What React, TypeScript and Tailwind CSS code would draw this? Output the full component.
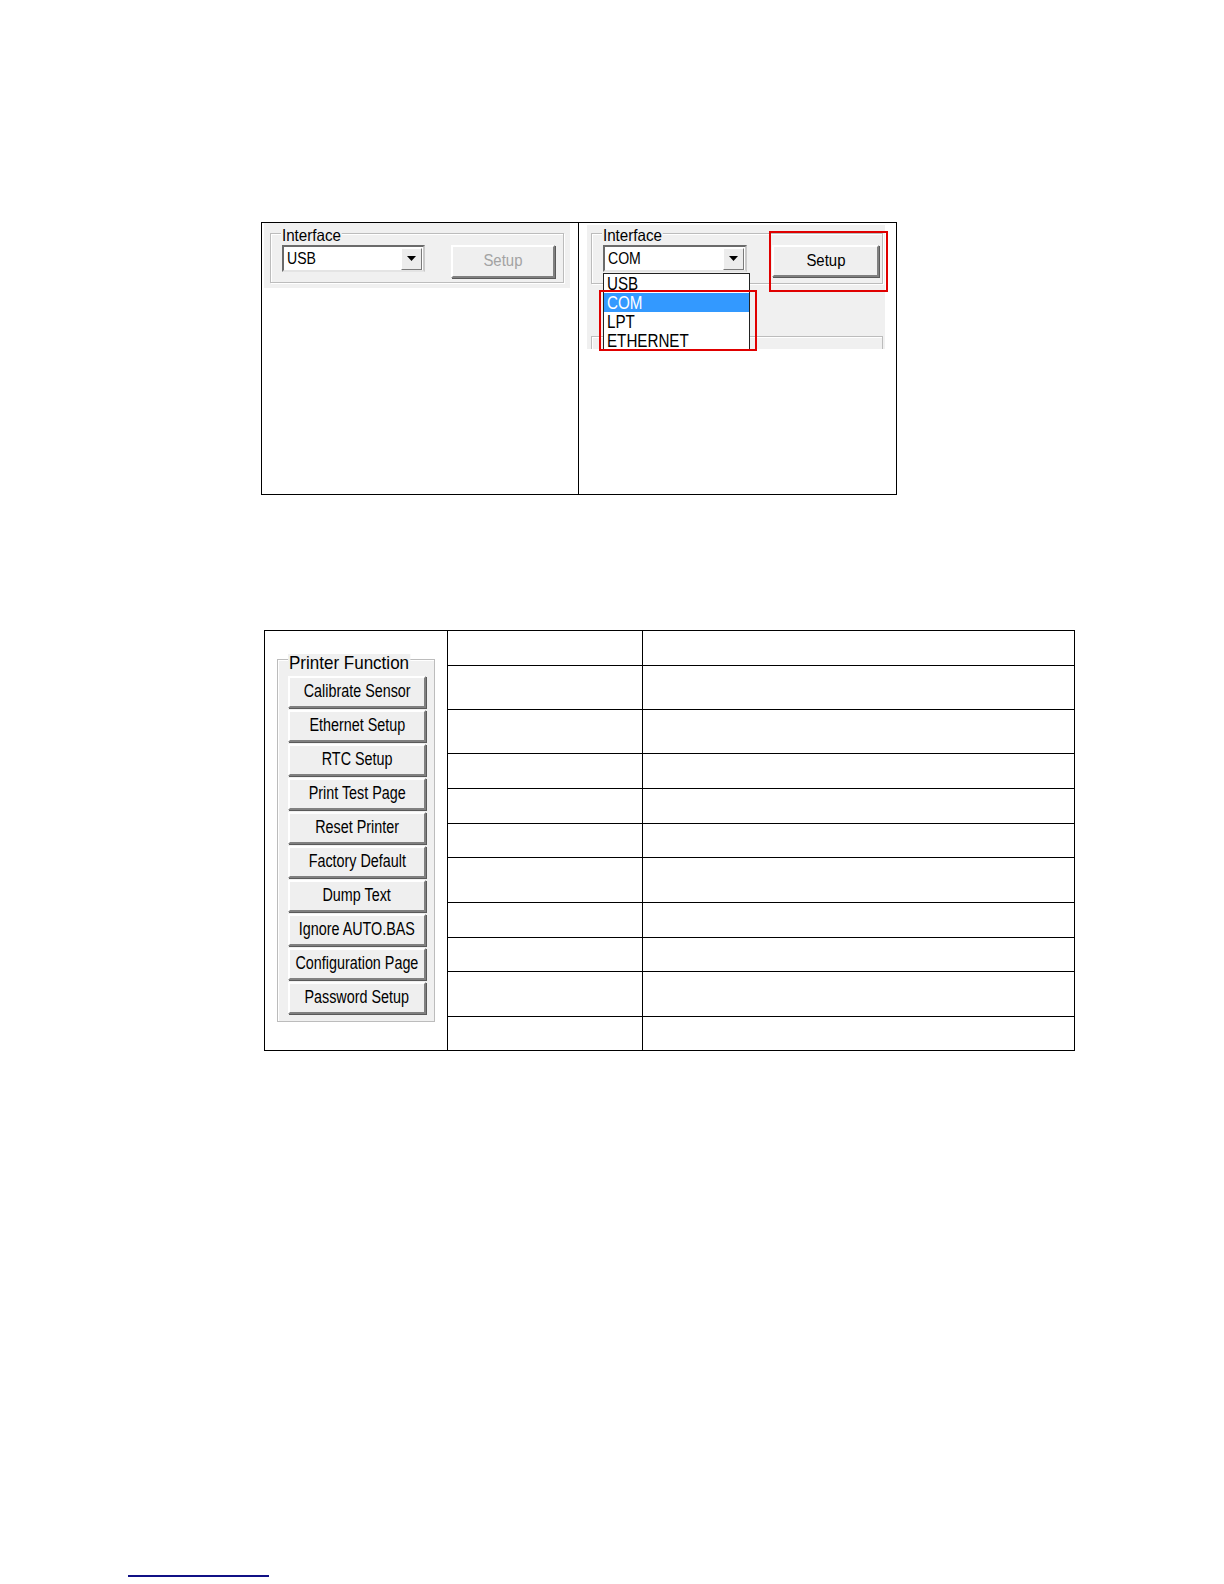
import React from "react";

const font = { fontFamily: '"Liberation Sans", Arial, sans-serif' };

function ComboBox({ value, width }: { value: string; width: string }) {
  return (
    <div
      className={`${width} h-[27px] flex items-center bg-white border-2 border-t-[#6b6b6b] border-l-[#6b6b6b] border-r-[#c9c9c9] border-b-[#e4e4e4]`}
    >
      <div className="flex-1 pl-[3px]">
        <span className="inline-block origin-left scale-x-[0.88] text-[16px] leading-none text-black whitespace-nowrap">
          {value}
        </span>
      </div>
      <div className="w-[21px] h-[22px] mr-[1px] flex items-center justify-center bg-[#ececec] border border-t-white border-l-white border-r-[#7a7a7a] border-b-[#7a7a7a]">
        <svg width="9" height="5" viewBox="0 0 9 5">
          <path d="M0 0 H9 L4.5 5 Z" fill="#000" />
        </svg>
      </div>
    </div>
  );
}

function WinButton({
  label,
  disabled,
  className,
  textClass,
}: {
  label: string;
  disabled?: boolean;
  className?: string;
  textClass: string;
}) {
  return (
    <div
      className={`flex items-center justify-center bg-[#efefef] border-2 border-t-white border-l-white border-r-[#808080] border-b-[#808080] shadow-[1px_1px_0_#5a5a5a] ${className ?? ""}`}
    >
      <span
        className={`inline-block leading-none whitespace-nowrap ${textClass} ${disabled ? "text-[#a3a3a3]" : "text-black"}`}
      >
        {label}
      </span>
    </div>
  );
}

function GroupBox({
  label,
  className,
  labelClass,
  children,
}: {
  label: string;
  className?: string;
  labelClass?: string;
  children?: React.ReactNode;
}) {
  return (
    <div
      className={`relative border border-[#bcbcbc] shadow-[inset_1px_1px_0_#ffffff,1px_1px_0_#ffffff] ${className ?? ""}`}
    >
      <span
        className={`absolute bg-[#f0f0f0] leading-none text-black whitespace-nowrap origin-left ${labelClass ?? ""}`}
      >
        {label}
      </span>
      {children}
    </div>
  );
}

// heights of the empty rows in the 2nd/3rd columns
const rowHeights = [34, 44, 44, 35, 35, 34, 45, 35, 34, 45, 34];

const functions = [
  "Calibrate Sensor",
  "Ethernet Setup",
  "RTC Setup",
  "Print Test Page",
  "Reset Printer",
  "Factory Default",
  "Dump Text",
  "Ignore AUTO.BAS",
  "Configuration Page",
  "Password Setup",
];

const listItems = ["USB", "COM", "LPT", "ETHERNET"];

export default function App() {
  return (
    <div className="bg-white pt-[222px] pb-[8px]" style={font}>
      {/* interface screenshots */}
      <div className="ml-[261px] w-[636px] h-[273px] border border-black flex">
        <div className="w-[317px] border-r border-black">
          <div className="ml-[2px] w-[306px] h-[65px] bg-[#f0f0f0] pt-[10px] pl-[6px]">
            <GroupBox
              label="Interface"
              className="w-[294px] h-[50px] pt-[11px] pl-[11px]"
              labelClass="-top-[7px] left-[10px] text-[16.5px] px-[1px] scale-x-[0.92]"
            >
              <div className="flex items-start gap-[26px]">
                <ComboBox value="USB" width="w-[143px]" />
                <WinButton
                  label="Setup"
                  disabled
                  className="w-[104px] h-[33px]"
                  textClass="text-[16.8px] scale-x-[0.89]"
                />
              </div>
            </GroupBox>
          </div>
        </div>

        <div className="flex-1 relative">
          <div className="ml-[8px] mt-[2px] w-[298px] h-[124px] bg-[#f0f0f0] pt-[8px] pl-[4px] flex flex-col">
            <GroupBox
              label="Interface"
              className="w-[292px] h-[51px] pt-[11px] pl-[11px]"
              labelClass="-top-[7px] left-[10px] text-[16.5px] px-[1px] scale-x-[0.92]"
            >
              <div className="flex items-start gap-[25px]">
                <ComboBox value="COM" width="w-[144px]" />
                <WinButton
                  label="Setup"
                  className="w-[107px] h-[32px]"
                  textClass="text-[16.8px] scale-x-[0.89]"
                />
              </div>
            </GroupBox>
            <div className="mt-[52px] w-[292px] flex-1 border-t border-l border-r border-[#bcbcbc] shadow-[inset_1px_1px_0_#ffffff]" />
          </div>

          {/* open dropdown list */}
          <div className="absolute left-[24px] top-[50px] w-[147px] h-[77px] bg-white border border-[#222] flex flex-col text-black overflow-hidden">
            {listItems.map((item) => (
              <div
                key={item}
                className={`h-[19px] shrink-0 flex items-center pl-[3px] pt-[2px] ${item === "COM" ? "bg-[#3399ff] text-white" : ""}`}
              >
                <span className="inline-block origin-left scale-x-[0.82] text-[18.5px] leading-none whitespace-nowrap">
                  {item}
                </span>
              </div>
            ))}
          </div>

          {/* highlight frames */}
          <div className="absolute left-[190px] top-[8px] w-[119px] h-[61px] border-2 border-[#e00000]" />
          <div className="absolute left-[20px] top-[67px] w-[158px] h-[61px] border-2 border-[#e00000]" />
        </div>
      </div>

      {/* printer function table */}
      <div className="ml-[264px] mt-[135px] w-[811px] grid grid-cols-[183px_195px_1fr] border border-black">
        <div className="row-span-11 border-r border-black pt-[28px] pl-[12px]">
          <GroupBox
            label="Printer Function"
            className="w-[158px] h-[363px] bg-[#f0f0f0] pt-[16px] pl-[10px]"
            labelClass="-top-[6px] left-[10px] text-[18.5px] px-[1px] scale-x-[0.92]"
          >
            <div className="flex flex-col gap-[2px]">
              {functions.map((f) => (
                <WinButton
                  key={f}
                  label={f}
                  className="w-[138px] h-[32px]"
                  textClass="text-[17.5px] scale-x-[0.82]"
                />
              ))}
            </div>
          </GroupBox>
        </div>
        {rowHeights.map((h, i) => (
          <React.Fragment key={i}>
            <div
              className={`border-r border-black ${i > 0 ? "border-t" : ""}`}
              style={{ height: h }}
            />
            <div className={i > 0 ? "border-t border-black" : ""} style={{ height: h }} />
          </React.Fragment>
        ))}
      </div>

      <div className="ml-[128px] mt-[524px] w-[141px] h-[2px] bg-[#101085]" />
    </div>
  );
}
